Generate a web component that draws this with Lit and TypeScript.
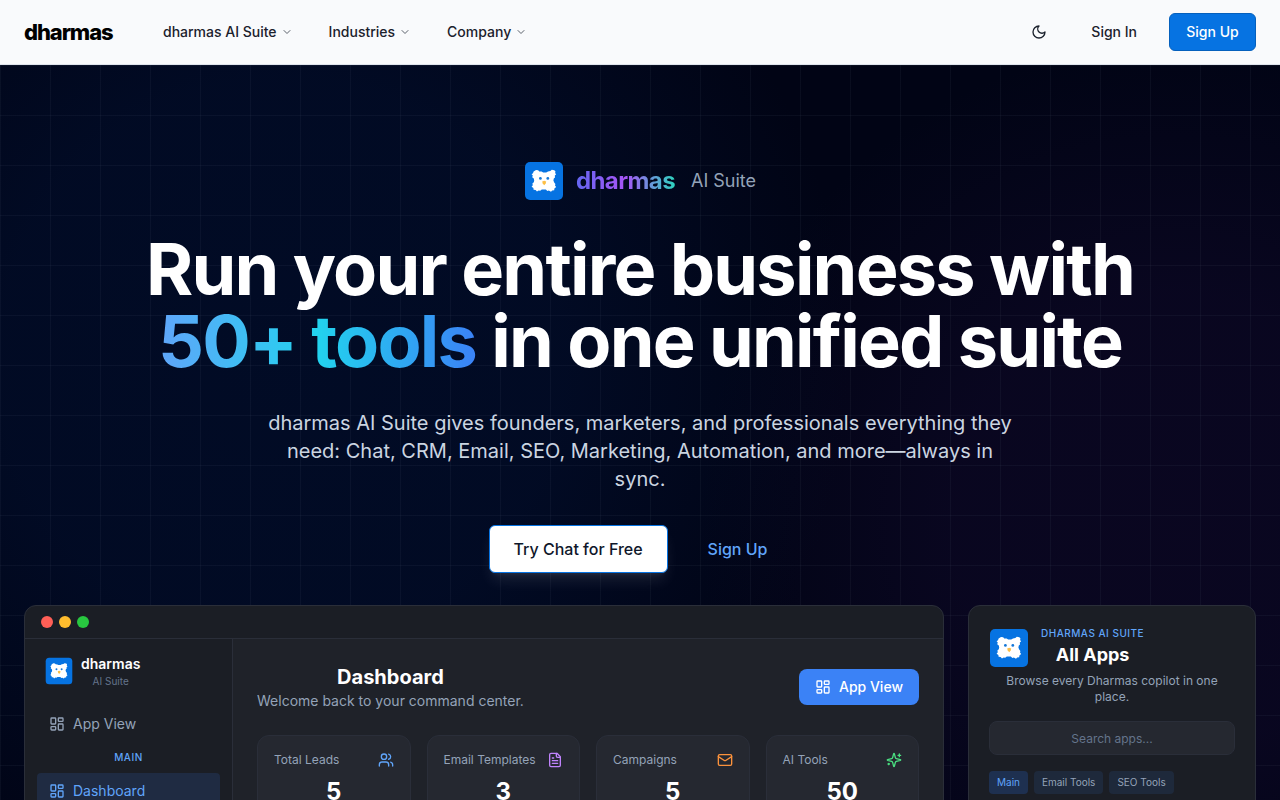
import { LitElement, html, css, svg } from "lit";
import { customElement, property } from "lit/decorators.js";

const icons: Record<string, unknown> = {
  chevron: svg`<path d="m6 9 6 6 6-6"/>`,
  moon: svg`<path d="M12 3a6 6 0 0 0 9 9 9 9 0 1 1-9-9Z"/>`,
  dashboard: svg`<rect width="7" height="9" x="3" y="3" rx="1"/><rect width="7" height="5" x="14" y="3" rx="1"/><rect width="7" height="9" x="14" y="12" rx="1"/><rect width="7" height="5" x="3" y="16" rx="1"/>`,
  users: svg`<path d="M16 21v-2a4 4 0 0 0-4-4H6a4 4 0 0 0-4 4v2"/><circle cx="9" cy="7" r="4"/><path d="M22 21v-2a4 4 0 0 0-3-3.87"/><path d="M16 3.13a4 4 0 0 1 0 7.75"/>`,
  file: svg`<path d="M15 2H6a2 2 0 0 0-2 2v16a2 2 0 0 0 2 2h12a2 2 0 0 0 2-2V7Z"/><path d="M14 2v4a2 2 0 0 0 2 2h4"/><path d="M10 9H8"/><path d="M16 13H8"/><path d="M16 17H8"/>`,
  mail: svg`<rect width="20" height="16" x="2" y="4" rx="2"/><path d="m22 7-8.97 5.7a1.94 1.94 0 0 1-2.06 0L2 7"/>`,
  sparkles: svg`<path d="M9.937 15.5A2 2 0 0 0 8.5 14.063l-6.135-1.582a.5.5 0 0 1 0-.962L8.5 9.936A2 2 0 0 0 9.937 8.5l1.582-6.135a.5.5 0 0 1 .963 0L14.063 8.5A2 2 0 0 0 15.5 9.937l6.135 1.581a.5.5 0 0 1 0 .964L15.5 14.063a2 2 0 0 0-1.437 1.437l-1.582 6.135a.5.5 0 0 1-.963 0z"/><path d="M20 3v4"/><path d="M22 5h-4"/><path d="M4 17v2"/><path d="M5 18H3"/>`,
};

@customElement("ui-icon")
class UiIcon extends LitElement {
  @property() name = "";
  @property({ type: Number }) size = 16;

  static styles = css`
    :host { display: inline-flex; flex: none; }
    svg { display: block; fill: none; stroke: currentColor; stroke-width: 2; stroke-linecap: round; stroke-linejoin: round; }
  `;

  render() {
    return html`<svg width=${this.size} height=${this.size} viewBox="0 0 24 24" aria-hidden="true">${icons[this.name]}</svg>`;
  }
}

@customElement("owl-mark")
class OwlMark extends LitElement {
  @property({ type: Number }) size = 40;

  static styles = css`
    :host { display: inline-flex; flex: none; }
    svg { display: block; }
  `;

  render() {
    return html`<svg width=${this.size} height=${this.size} viewBox="0 0 40 40" role="img" aria-label="dharmas logo">
      <rect x="1" y="1" width="38" height="38" rx="5" fill="#0673e2"/>
      <path fill="#fff" d="M9.6 10.4 12 9l2.2.2 1 1.2 2.4.2 1.6 1h3l1.8-1.2 2.4-.4 1.4-1.2 2.6.4 1.2 1.6-.6 1.2 1.2 1.2-1.4 1.4.2 1.8-1.2 1.2-.4 2 .8 1.8 1.2 1.6-.4 1.6 1.2 1.4-1.8 1.4-.2 1.8-2 .2-1.2 1.4-2.2-1.2-1.4.4-1.6-1.4h-4l-1.6 1.2-1.6-.4-1.6 1.2-1.4-1.6-2-.2-.2-1.8-1.8-1.2 1.2-1.6-.4-1.6 1.4-1.4.4-1.8-.4-1.8-1.6-1.4.6-1.6-1.2-1.4 1.4-1z"/>
      <circle cx="16.4" cy="17.4" r="1.4" fill="#1678d8"/>
      <circle cx="23.8" cy="17.4" r="1.4" fill="#1678d8"/>
      <path fill="#fdbf45" d="M18.2 20.4 20.2 19.8l2 .6-.5 2-1.5 1.8-1.5-1.8z"/>
    </svg>`;
  }
}

const menus = ["dharmas AI Suite", "Industries", "Company"];
const stats = [
  { label: "Total Leads", value: "5", icon: "users", tone: "blue" },
  { label: "Email Templates", value: "3", icon: "file", tone: "purple" },
  { label: "Campaigns", value: "5", icon: "mail", tone: "orange" },
  { label: "AI Tools", value: "50", icon: "sparkles", tone: "green" },
];
const chips = ["Main", "Email Tools", "SEO Tools"];

@customElement("app-root")
class AppRoot extends LitElement {
  static styles = css`
    :host {
      display: flex;
      flex-direction: column;
      height: 100vh;
      overflow: hidden;
      font-family: Inter, "Liberation Sans", sans-serif;
      font-size: 14px;
      line-height: 20px;
      color: #fff;
      background: #020617;
    }
    * { box-sizing: border-box; }
    h1, h2, h3, p { margin: 0; }
    a { color: inherit; text-decoration: none; }
    button, input { font: inherit; color: inherit; margin: 0; border: 0; background: none; }
    button { cursor: pointer; }

    .top {
      flex: none;
      display: flex;
      align-items: center;
      height: 65px;
      padding: 0 24px;
      background: #f9fafc;
      border-bottom: 1px solid #dfe4ec;
      color: #1b212c;
      font-weight: 500;
    }
    .wordmark { min-width: 91px; font-weight: 800; font-size: 22px; line-height: 32px; letter-spacing: -0.05em; color: #000; }
    .menus { display: flex; gap: 4px; margin-left: 32px; flex: 1; }
    .menu { display: flex; align-items: center; gap: 4px; padding: 8px 16px; }
    .menu ui-icon { color: #5b616b; }
    .account { display: flex; align-items: center; gap: 16px; }
    .theme { display: flex; padding: 12px; }
    .signin { padding: 8px 16px; }
    .signup { min-width: 87px; padding: 8px 16px; border: 1px solid #0560bd; border-radius: 6px; background: #0673e2; color: #fff; text-align: center; }

    .hero {
      flex: 1;
      min-height: 0;
      overflow: hidden;
      padding: 96px 24px 0;
      text-align: center;
      background:
        linear-gradient(to right, rgba(148, 163, 184, 0.06) 1px, transparent 1px) 0 0 / 50px 50px,
        linear-gradient(to bottom, rgba(148, 163, 184, 0.06) 1px, transparent 1px) 0 0 / 50px 50px,
        radial-gradient(circle at 22% 40%, rgba(2, 22, 62, 0.4), rgba(2, 22, 62, 0.36) 26%, transparent 52%),
        radial-gradient(circle at 92% 62%, rgba(50, 18, 84, 0.18), rgba(48, 18, 84, 0.17) 18%, transparent 38%),
        #010415;
    }
    .brand { display: flex; align-items: center; justify-content: center; gap: 12px; height: 40px; }
    .brand-name {
      font-size: 24px; line-height: 32px; font-weight: 700; letter-spacing: -0.025em;
      background: linear-gradient(to right, #6366f1, #a855f7, #2dd4bf);
      -webkit-background-clip: text; background-clip: text; color: transparent;
    }
    .brand-sub { font-size: 18px; line-height: 28px; color: #94a3b8; margin-left: 4px; }
    .title { margin-top: 32px; font-size: 72px; line-height: 72px; font-weight: 700; letter-spacing: -0.025em; }
    .accent {
      background: linear-gradient(to right, #60a5fa, #22d3ee, #3b82f6);
      -webkit-background-clip: text; background-clip: text; color: transparent;
    }
    .lead { max-width: 756px; margin: 32px auto 0; font-size: 20px; line-height: 28px; color: #cbd5e1; }
    .actions { display: flex; justify-content: center; gap: 16px; margin-top: 32px; font-size: 16px; line-height: 24px; font-weight: 500; }
    .try {
      padding: 11px 24px; border: 1px solid #0673e2; border-radius: 6px; background: #fff; color: #0f172a;
      box-shadow: 0 10px 15px -3px rgba(255, 255, 255, 0.1), 0 4px 6px -4px rgba(255, 255, 255, 0.1);
    }
    .join { padding: 12px 24px; color: #60a5fa; }

    .previews { display: grid; grid-template-columns: minmax(0, 1fr) 288px; gap: 24px; margin-top: 32px; }
    .panel { border: 1px solid #2a2e39; border-radius: 12px; background: #1b1e25; overflow: hidden; }
    .chrome { display: flex; gap: 6px; padding: 10px 16px; border-bottom: 1px solid #2a2e39; }
    .dot { width: 12px; height: 12px; border-radius: 50%; }
    .red { background: #ff5f57; }
    .yellow { background: #febc2e; }
    .lime { background: #28c840; }
    .workspace { display: grid; grid-template-columns: 208px minmax(0, 1fr); }
    .side { padding: 12px; border-right: 1px solid #2a2e39; }
    .side-brand { display: flex; align-items: center; gap: 8px; padding: 2px 8px; }
    .side-name { font-weight: 600; line-height: 21px; }
    .side-sub { font-size: 10px; line-height: 15px; color: #64748b; }
    .item { display: flex; align-items: center; gap: 8px; padding: 8px 12px; border-radius: 4px; color: #94a3b8; }
    .first { margin-top: 15px; }
    .group { font-size: 10px; line-height: 15px; font-weight: 500; color: #60a5fa; letter-spacing: 0.05em; margin: 8px 0; }
    .current { background: #1f2b42; color: #60a5fa; }
    .main { padding: 24px; background: #1f2229; }
    .main-head { display: flex; align-items: center; justify-content: space-between; }
    .main-title { font-size: 20px; line-height: 28px; font-weight: 700; }
    .muted { color: #94a3b8; }
    .view { display: flex; align-items: center; gap: 8px; padding: 8px 16px; border-radius: 8px; background: #3b82f6; font-weight: 500; }
    .stats { display: grid; grid-template-columns: repeat(4, minmax(0, 1fr)); gap: 16px; margin-top: 24px; }
    .stat { padding: 16px; border: 1px solid #2a2e39; border-radius: 12px; background: #252830; }
    .stat-head { display: flex; justify-content: space-between; font-size: 12px; line-height: 16px; color: #94a3b8; white-space: nowrap; }
    .stat-value { margin-top: 8px; font-size: 24px; line-height: 32px; font-weight: 700; }
    .blue { color: #60a5fa; }
    .purple { color: #c084fc; }
    .orange { color: #fb923c; }
    .green { color: #4ade80; }

    .apps { padding: 20px; }
    .apps-head { display: flex; align-items: center; gap: 12px; }
    .eyebrow { font-size: 10px; line-height: 15px; font-weight: 500; letter-spacing: 0.05em; text-transform: uppercase; color: #60a5fa; }
    .apps-title { font-size: 18px; line-height: 28px; font-weight: 700; }
    .apps-text { margin-top: 4px; font-size: 12px; line-height: 16px; color: #94a3b8; }
    .search {
      display: block; width: 100%; margin-top: 16px; padding: 8px 12px; border: 1px solid #2a2e39; border-radius: 8px;
      background: #252830; font-size: 12px; line-height: 16px; height: 34px; text-align: center;
    }
    .search::placeholder { color: #64748b; opacity: 1; }
    .chips { display: flex; gap: 6px; margin-top: 16px; font-size: 10px; line-height: 15px; }
    .chip { padding: 4px 8px; border-radius: 4px; background: #1e293b; color: #94a3b8; }
    .chosen { background: #1e3050; color: #60a5fa; }
  `;

  render() {
    return html`
      <header class="top">
        <a class="wordmark" href="#">dharmas</a>
        <nav class="menus">
          ${menus.map((m) => html`<button class="menu">${m}<ui-icon name="chevron" size="12"></ui-icon></button>`)}
        </nav>
        <div class="account">
          <button class="theme" aria-label="Toggle theme"><ui-icon name="moon"></ui-icon></button>
          <a class="signin" href="#">Sign In</a>
          <a class="signup" href="#">Sign Up</a>
        </div>
      </header>
      <main class="hero">
        <div class="brand">
          <owl-mark></owl-mark>
          <span class="brand-name">dharmas</span>
          <span class="brand-sub">AI Suite</span>
        </div>
        <h1 class="title">Run your entire business with<br /><span class="accent">50+ tools</span> in one unified suite</h1>
        <p class="lead">dharmas AI Suite gives founders, marketers, and professionals everything they need: Chat, CRM, Email, SEO, Marketing, Automation, and more—always in sync.</p>
        <div class="actions">
          <a class="try" href="#">Try Chat for Free</a>
          <a class="join" href="#">Sign Up</a>
        </div>
        <div class="previews">
          <section class="panel">
            <div class="chrome"><span class="dot red"></span><span class="dot yellow"></span><span class="dot lime"></span></div>
            <div class="workspace">
              <aside class="side">
                <div class="side-brand">
                  <owl-mark size="28"></owl-mark>
                  <div><div class="side-name">dharmas</div><div class="side-sub">AI Suite</div></div>
                </div>
                <a class="item first" href="#"><ui-icon name="dashboard"></ui-icon>App View</a>
                <div class="group">MAIN</div>
                <a class="item current" href="#"><ui-icon name="dashboard"></ui-icon>Dashboard</a>
              </aside>
              <div class="main">
                <div class="main-head">
                  <div>
                    <h2 class="main-title">Dashboard</h2>
                    <p class="muted">Welcome back to your command center.</p>
                  </div>
                  <button class="view"><ui-icon name="dashboard"></ui-icon>App View</button>
                </div>
                <div class="stats">
                  ${stats.map((s) => html`
                    <div class="stat">
                      <div class="stat-head"><span>${s.label}</span><ui-icon class=${s.tone} name=${s.icon}></ui-icon></div>
                      <div class="stat-value">${s.value}</div>
                    </div>`)}
                </div>
              </div>
            </div>
          </section>
          <section class="panel apps">
            <div class="apps-head">
              <owl-mark></owl-mark>
              <div><div class="eyebrow">Dharmas AI Suite</div><h3 class="apps-title">All Apps</h3></div>
            </div>
            <p class="apps-text">Browse every Dharmas copilot in one place.</p>
            <input class="search" type="text" aria-label="Search apps" placeholder="Search apps..." />
            <div class="chips">
              ${chips.map((c, i) => html`<button class="chip ${i === 0 ? "chosen" : ""}">${c}</button>`)}
            </div>
          </section>
        </div>
      </main>
    `;
  }
}
